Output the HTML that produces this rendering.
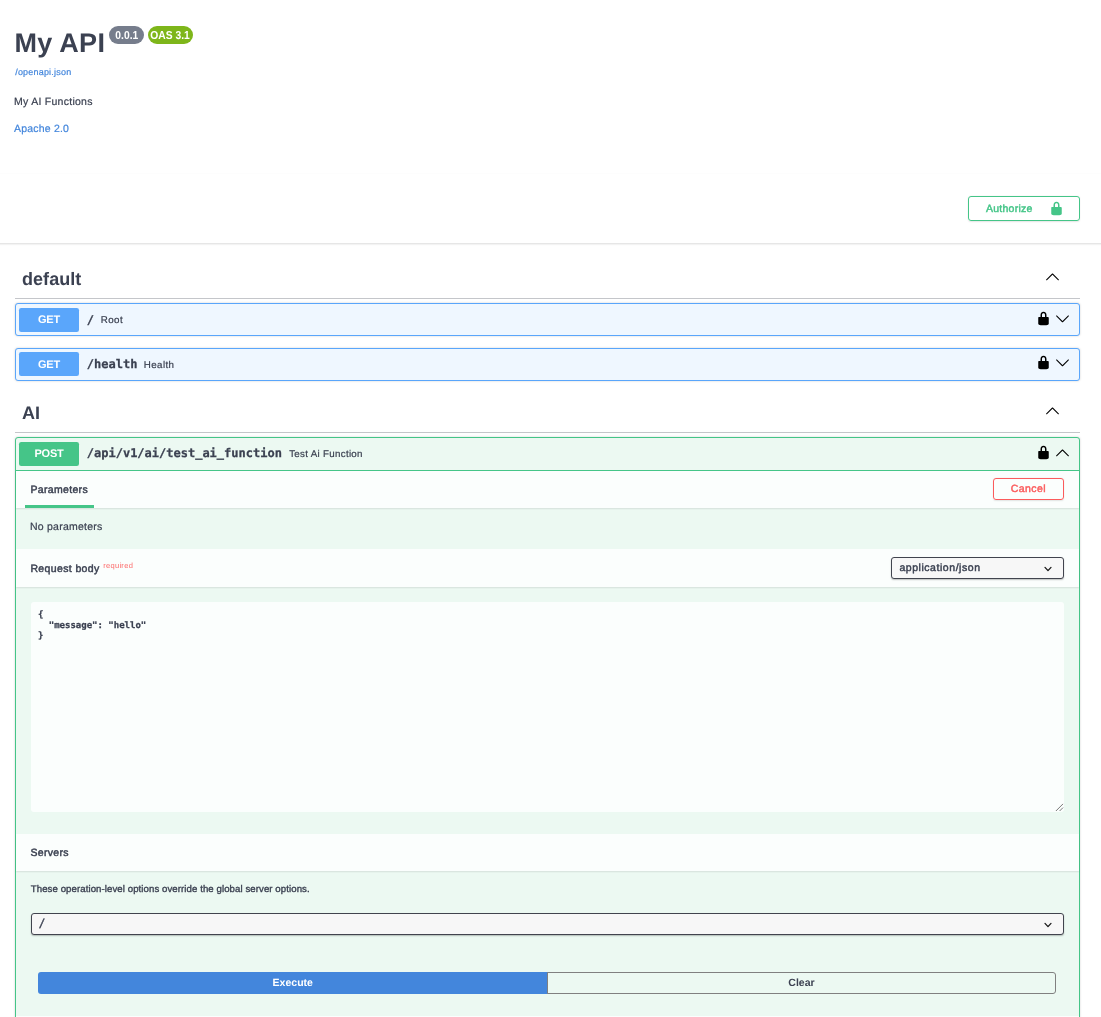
<!DOCTYPE html>
<html lang="en">
<head>
<meta charset="utf-8">
<title>My API - Swagger UI</title>
<style>
html,body{margin:0;padding:0;background:#fff;}
body{will-change:transform;text-rendering:geometricPrecision;width:1101px;height:1017px;position:relative;overflow:hidden;font-family:"Liberation Sans",sans-serif;color:#3b4151;}
.a{position:absolute;}
.t{position:absolute;white-space:nowrap;line-height:1;margin:0;padding:0;}
.b{font-weight:bold;}
.r{-webkit-text-stroke:.2px currentColor;}
.sb{font-weight:normal;-webkit-text-stroke:.45px currentColor;letter-spacing:.42px;}
.hh{font-size:18px;font-weight:bold;letter-spacing:.05px;}
.mono{font-family:"DejaVu Sans Mono","Liberation Mono",monospace;font-weight:bold;-webkit-text-stroke:.25px currentColor;}
a{color:#4386dc;text-decoration:none;}
.badge{position:absolute;top:25.9px;height:17.9px;border-radius:20px;color:#fff;font-weight:bold;font-size:11.5px;line-height:20.4px;text-align:center;}
.badge span{display:inline-block;transform:scaleX(.895);}
.opblock{position:absolute;left:15px;width:1065px;box-sizing:border-box;border-radius:3px;box-shadow:0 0 2.25px rgba(0,0,0,.19);}
.get{border:1px solid #5aa6fb;background:#eff7ff;height:32.7px;}
.post{border:1px solid #45c588;background:#ecf9f2;}
.method{position:absolute;left:19px;width:60px;height:23.6px;border-radius:2.25px;color:#fff;font-weight:bold;font-size:11px;letter-spacing:-.25px;line-height:23.6px;text-align:center;}
.hdr{position:absolute;left:16px;width:1063px;background:rgba(255,255,255,.8);box-shadow:0 1px 1.5px rgba(0,0,0,.1);}
svg{position:absolute;display:block;}
</style>
</head>
<body>

<!-- info -->
<h2 class="t b" id="title" style="left:14.4px;top:29.5px;font-size:27px;letter-spacing:.3px;">My API</h2>
<div class="badge" style="left:109.2px;width:34.8px;background:#767d8c;"><span>0.0.1</span></div>
<div class="badge" style="left:147.9px;width:45px;background:#7eb61a;"><span>OAS 3.1</span></div>
<a class="t r" id="oalink" style="left:15.2px;top:67.5px;font-size:9px;letter-spacing:.2px;">/openapi.json</a>
<p class="t r" id="desc" style="left:14px;top:97px;font-size:10.5px;letter-spacing:.27px;">My AI Functions</p>
<a class="t r" id="lic" style="left:14px;top:124px;font-size:10.5px;letter-spacing:.2px;">Apache 2.0</a>

<!-- scheme container -->
<div class="a" style="left:-10px;top:174px;width:1121px;height:69px;background:#fff;box-shadow:0 1px 2px 0 rgba(0,0,0,.15);"></div>
<div class="a" id="authbtn" style="left:968px;top:196px;width:112px;height:24.6px;box-sizing:border-box;border:1.5px solid #45c588;border-radius:3px;box-shadow:0 .75px 1.5px rgba(0,0,0,.1);"></div>
<span class="t sb" id="authtxt" style="left:986px;top:204px;font-size:10.5px;letter-spacing:.25px;color:#45c588;">Authorize</span>
<svg id="authlock" style="left:1048.9px;top:200.9px;" width="15" height="15" viewBox="0 0 20 20" fill="#45c588"><path d="M15.8 8H14V5.600C14 2.703 12.665 1 10 1 7.334 1 6 2.703 6 5.600V8H4c-.553 0-1 .646-1 1.199V17c0 .549.428 1.139.951 1.307l1.197.387C5.672 18.861 6.550 19 7.100 19h5.800c.549 0 1.428-.139 1.951-.307l1.196-.387c.524-.167.953-.757.953-1.306V9.199C17 8.646 16.352 8 15.800 8zM12 8H8V5.199C8 3.754 8.797 3 10 3c1.203 0 2 .754 2 2.199V8z"/></svg>

<!-- default tag -->
<h3 class="t hh" id="h-default" style="left:22px;top:269.6px;">default</h3>
<svg id="arr1" style="left:1045px;top:268.9px;" width="15" height="15" viewBox="0 0 20 20" fill="#000"><path d="M 17.418 14.908 C 17.69 15.176 18.127 15.176 18.397 14.908 C 18.667 14.64 18.668 14.207 18.397 13.939 L 10.489 6.109 C 10.219 5.841 9.782 5.841 9.51 6.109 L 1.602 13.939 C 1.332 14.207 1.332 14.64 1.602 14.908 C 1.872 15.176 2.311 15.176 2.581 14.908 L 10 7.767 L 17.418 14.908 Z"/></svg>
<div class="a" style="left:15px;top:298px;width:1065px;height:1px;background:rgba(59,65,81,.3);"></div>

<div class="opblock get" style="top:303.2px;"></div>
<div class="method" id="m1" style="line-height:25.4px;top:308.1px;background:#5aa6fb;">GET</div>
<span class="t mono" id="p1" style="left:86.8px;top:314px;font-size:12px;">/</span>
<span class="t r" id="s1" style="left:100.8px;top:315.8px;font-size:9.75px;letter-spacing:.4px;">Root</span>
<svg class="lock" style="left:1036px;top:311.1px;" width="15" height="15" viewBox="0 0 20 20" fill="#000"><path d="M15.8 8H14V5.600C14 2.703 12.665 1 10 1 7.334 1 6 2.703 6 5.600V8H4c-.553 0-1 .646-1 1.199V17c0 .549.428 1.139.951 1.307l1.197.387C5.672 18.861 6.550 19 7.100 19h5.800c.549 0 1.428-.139 1.951-.307l1.196-.387c.524-.167.953-.757.953-1.306V9.199C17 8.646 16.352 8 15.800 8zM12 8H8V5.199C8 3.754 8.797 3 10 3c1.203 0 2 .754 2 2.199V8z"/></svg>
<svg class="dn" style="left:1054.9px;top:310.7px;" width="15" height="15" viewBox="0 0 20 20" fill="#000"><path d="M17.418 6.109c.272-.268.709-.268.979 0s.271.701 0 .969l-7.908 7.830c-.27.268-.707.268-.979 0l-7.908-7.830c-.27-.268-.27-.701 0-.969.271-.268.709-.268.979 0L10 13.250l7.418-7.141z"/></svg>

<div class="opblock get" style="top:348.2px;"></div>
<div class="method" id="m2" style="line-height:26.8px;top:352.4px;background:#5aa6fb;">GET</div>
<span class="t mono" id="p2" style="left:86.8px;top:358.1px;font-size:12px;">/health</span>
<span class="t r" id="s2" style="left:143.8px;top:360.8px;font-size:9.75px;letter-spacing:.4px;">Health</span>
<svg class="lock" style="left:1036px;top:355px;" width="15" height="15" viewBox="0 0 20 20" fill="#000"><path d="M15.8 8H14V5.600C14 2.703 12.665 1 10 1 7.334 1 6 2.703 6 5.600V8H4c-.553 0-1 .646-1 1.199V17c0 .549.428 1.139.951 1.307l1.197.387C5.672 18.861 6.550 19 7.100 19h5.800c.549 0 1.428-.139 1.951-.307l1.196-.387c.524-.167.953-.757.953-1.306V9.199C17 8.646 16.352 8 15.800 8zM12 8H8V5.199C8 3.754 8.797 3 10 3c1.203 0 2 .754 2 2.199V8z"/></svg>
<svg class="dn" style="left:1054.9px;top:354.9px;" width="15" height="15" viewBox="0 0 20 20" fill="#000"><path d="M17.418 6.109c.272-.268.709-.268.979 0s.271.701 0 .969l-7.908 7.830c-.27.268-.707.268-.979 0l-7.908-7.830c-.27-.268-.27-.701 0-.969.271-.268.709-.268.979 0L10 13.250l7.418-7.141z"/></svg>

<!-- AI tag -->
<h3 class="t hh" id="h-ai" style="left:22px;top:403.8px;">AI</h3>
<svg id="arr2" style="left:1045px;top:402.9px;" width="15" height="15" viewBox="0 0 20 20" fill="#000"><path d="M 17.418 14.908 C 17.69 15.176 18.127 15.176 18.397 14.908 C 18.667 14.64 18.668 14.207 18.397 13.939 L 10.489 6.109 C 10.219 5.841 9.782 5.841 9.51 6.109 L 1.602 13.939 C 1.332 14.207 1.332 14.64 1.602 14.908 C 1.872 15.176 2.311 15.176 2.581 14.908 L 10 7.767 L 17.418 14.908 Z"/></svg>
<div class="a" style="left:15px;top:432px;width:1065px;height:1px;background:rgba(59,65,81,.3);"></div>

<!-- POST opblock -->
<div class="opblock post" style="top:437.2px;height:620px;"></div>
<div class="method" id="m3" style="line-height:25.2px;top:442.2px;background:#45c588;">POST</div>
<span class="t mono" id="p3" style="left:86.8px;top:447.1px;font-size:12px;">/api/v1/ai/test_ai_function</span>
<span class="t r" id="s3" style="left:289.2px;top:449.8px;font-size:9.75px;letter-spacing:.3px;">Test Ai Function</span>
<svg class="lock" style="left:1036px;top:445px;" width="15" height="15" viewBox="0 0 20 20" fill="#000"><path d="M15.8 8H14V5.600C14 2.703 12.665 1 10 1 7.334 1 6 2.703 6 5.600V8H4c-.553 0-1 .646-1 1.199V17c0 .549.428 1.139.951 1.307l1.197.387C5.672 18.861 6.550 19 7.100 19h5.800c.549 0 1.428-.139 1.951-.307l1.196-.387c.524-.167.953-.757.953-1.306V9.199C17 8.646 16.352 8 15.800 8zM12 8H8V5.199C8 3.754 8.797 3 10 3c1.203 0 2 .754 2 2.199V8z"/></svg>
<svg id="arr3" style="left:1055px;top:444.9px;" width="15" height="15" viewBox="0 0 20 20" fill="#000"><path d="M 17.418 14.908 C 17.69 15.176 18.127 15.176 18.397 14.908 C 18.667 14.64 18.668 14.207 18.397 13.939 L 10.489 6.109 C 10.219 5.841 9.782 5.841 9.51 6.109 L 1.602 13.939 C 1.332 14.207 1.332 14.64 1.602 14.908 C 1.872 15.176 2.311 15.176 2.581 14.908 L 10 7.767 L 17.418 14.908 Z"/></svg>
<div class="a" style="left:16px;top:470.2px;width:1063px;height:1px;background:#45c588;"></div>

<!-- Parameters header -->
<div class="hdr" style="top:471.2px;height:37px;"></div>
<span class="t sb" id="params" style="left:30.4px;top:485px;font-size:10.5px;letter-spacing:.33px;">Parameters</span>
<div class="a" style="left:24.7px;top:505px;width:69px;height:3px;background:#45c588;"></div>
<div class="a" id="cancel" style="left:993px;top:478.2px;width:71px;height:21.8px;box-sizing:border-box;border:1.5px solid #fb5b5c;border-radius:3px;box-shadow:0 .75px 1.5px rgba(0,0,0,.1);"></div>
<span class="t sb" id="canceltxt" style="left:1010.8px;top:483.7px;font-size:10.5px;color:#fb5b5c;">Cancel</span>

<span class="t r" id="noparams" style="left:30px;top:522px;font-size:10.5px;letter-spacing:.23px;">No parameters</span>

<!-- Request body header -->
<div class="hdr" style="top:548.8px;height:38.6px;"></div>
<span class="t sb" id="reqbody" style="left:30.4px;top:564.2px;font-size:10.5px;letter-spacing:.37px;">Request body</span>
<span class="t" id="required" style="left:103.2px;top:561.6px;font-size:7.5px;letter-spacing:.3px;color:rgba(255,0,0,.6);">required</span>
<div class="a" id="sel1" style="left:891px;top:557px;width:173px;height:22px;box-sizing:border-box;border:1.5px solid #41444e;border-radius:3px;background:#f7f7f7;box-shadow:0 1px 1.5px 0 rgba(0,0,0,.25);"></div>
<span class="t sb" id="sel1txt" style="left:899.4px;top:562.9px;font-size:10.5px;letter-spacing:.55px;">application/json</span>
<svg style="left:1043.6px;top:564.9px;" width="8" height="8" viewBox="0 0 8 8" fill="none" stroke="#1a1a1a" stroke-width="1.3" stroke-linecap="round" stroke-linejoin="round"><path d="M1 2.4 L4 5.6 L7 2.4"/></svg>

<!-- textarea -->
<div class="a" id="ta" style="left:31px;top:602px;width:1033px;height:210px;border-radius:3px;background:rgba(255,255,255,.8);"></div>
<pre class="t mono" id="code" style="white-space:pre;left:37.9px;top:610px;font-size:9px;line-height:10.5px;">{
  "message": "hello"
}</pre>
<svg style="left:1054px;top:802px;" width="10" height="10" viewBox="0 0 10 10" fill="none" stroke="#555" stroke-width="0.8"><path d="M1.9 9 L9 1.9 M5.6 9 L9 5.6"/></svg>

<!-- Servers header -->
<div class="hdr" style="top:834px;height:37.2px;"></div>
<span class="t sb" id="servers" style="left:30.4px;top:847.8px;font-size:10.5px;letter-spacing:.33px;">Servers</span>
<span class="t" id="msg" style="left:30.8px;top:885.2px;font-size:9.6px;-webkit-text-stroke:.35px #3b4151;letter-spacing:.09px;">These operation-level options override the global server options.</span>
<div class="a" id="sel2" style="left:31px;top:913px;width:1033px;height:22px;box-sizing:border-box;border:1.5px solid #41444e;border-radius:3px;background:#f7f7f7;box-shadow:0 1px 1.5px 0 rgba(0,0,0,.25);"></div>
<span class="t" id="sel2txt" style="left:40.2px;top:917px;font-size:13px;-webkit-text-stroke:.35px currentColor;transform:skewX(-10deg);">/</span>
<svg style="left:1043.6px;top:920.9px;" width="8" height="8" viewBox="0 0 8 8" fill="none" stroke="#1a1a1a" stroke-width="1.3" stroke-linecap="round" stroke-linejoin="round"><path d="M1 2.4 L4 5.6 L7 2.4"/></svg>

<!-- buttons -->
<div class="a" id="exec" style="left:38px;top:972px;width:509.5px;height:22px;background:#4386dc;border-radius:3px 0 0 3px;color:#fff;font-weight:bold;font-size:10.5px;line-height:22.8px;text-align:center;">Execute</div>
<div class="a" id="clear" style="left:547px;top:972px;width:509px;height:22px;box-sizing:border-box;border:1.5px solid #808080;border-radius:0 3px 3px 0;color:#3b4151;font-weight:bold;font-size:10.5px;line-height:20.6px;text-align:center;">Clear</div>

<!-- Responses header (cut off) -->
<div class="hdr" style="top:1016.3px;height:30px;"></div>
<span class="t sb" style="left:30.4px;top:1030px;font-size:10.5px;">Responses</span>

</body>
</html>
